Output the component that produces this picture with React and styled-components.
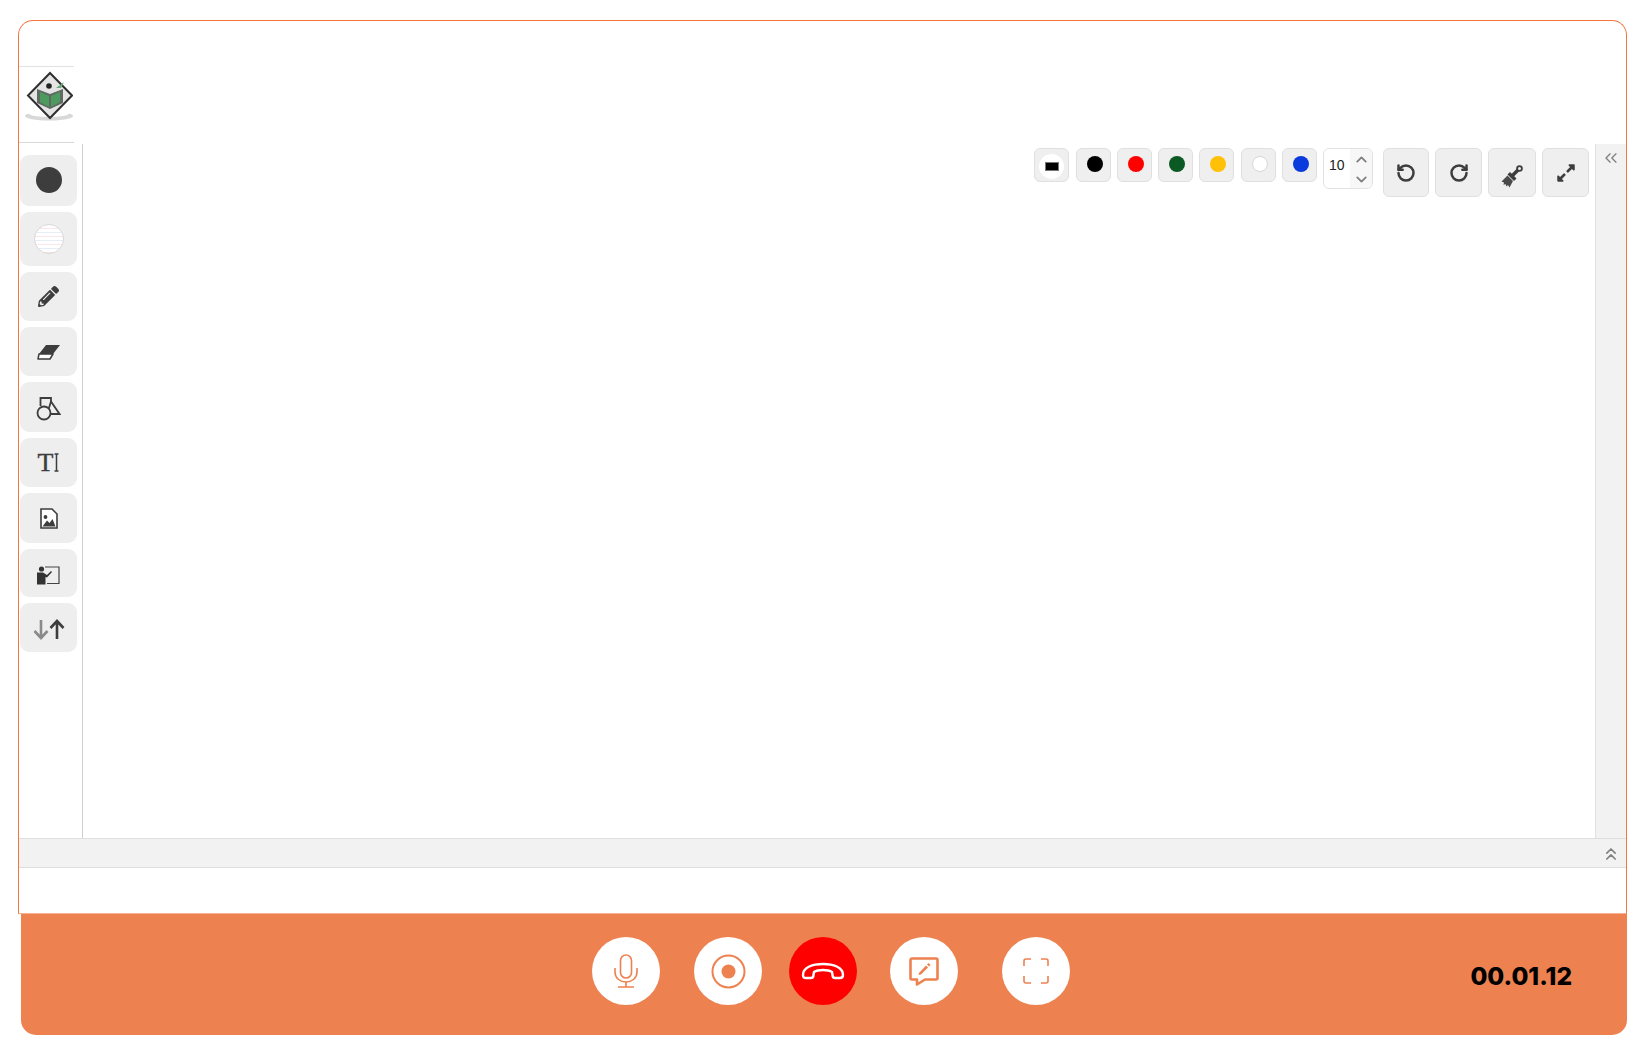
import React from "react";
import styled, { createGlobalStyle } from "styled-components";
import { ChevronsLeft, ChevronsUp, ChevronUp, ChevronDown, RotateCcw, RotateCw } from "lucide-react";
import { FaPencilAlt, FaExpandAlt } from "react-icons/fa";

const ORANGE = "#ee8150";

const GlobalStyle = createGlobalStyle`
  html, body {
    margin: 0;
    padding: 0;
    background: #fff;
    font-family: "Liberation Sans", Arial, sans-serif;
  }
`;

const Page = styled.div`
  width: 1650px;
  height: 1053px;
  padding: 20px 23px 0 18px;
  box-sizing: border-box;
  overflow: hidden;
`;

const Frame = styled.div`
  height: 894px;
  box-sizing: border-box;
  border: 1px solid #f4753f;
  border-bottom: 1px solid #f8b08e;
  border-radius: 15px 15px 0 0;
  padding-top: 45px;
`;

const LogoCell = styled.div`
  width: 55px;
  height: 77px;
  box-sizing: border-box;
  border-top: 1px solid #e2e2e2;
  border-bottom: 1px solid #d8d8d8;
  display: flex;
  align-items: flex-start;
  padding: 3px 0 0 6px;

  svg {
    filter: blur(0.4px);
  }
`;

const Board = styled.div`
  display: flex;
  height: 694px;
  margin-top: 1px;
`;

const Sidebar = styled.aside`
  width: 64px;
  box-sizing: border-box;
  border-right: 1px solid #cfcfcf;
  padding: 11px 0 0 1px;
  display: flex;
  flex-direction: column;
  gap: 6px;
`;

const ToolButton = styled.div`
  width: 57px;
  height: ${(p) => p.$h}px;
  box-sizing: border-box;
  padding-top: ${(p) => p.$nudge || 0}px;
  border-radius: 9px;
  background: #eeeeee;
  color: #3d3d3d;
  display: flex;
  align-items: center;
  justify-content: center;
  flex-shrink: 0;
`;

const FillDot = styled.span`
  width: 26px;
  height: 26px;
  margin-bottom: 1px;
  border-radius: 50%;
  background: #3d3d3d;
`;

const PaperDot = styled.span`
  width: 28px;
  height: 28px;
  border-radius: 50%;
  border: 1px solid #d9d9d9;
  background: repeating-linear-gradient(180deg, #fff 0 3px, #f8e6ea 3px 4px, #fff 4px 7px, #e6ecf8 7px 8px);
`;

const TextTool = styled.span`
  display: flex;
  align-items: center;
  gap: 1px;
  font: 400 26px "Liberation Serif", serif;
  -webkit-text-stroke: 0.4px #3d3d3d;
  color: #3d3d3d;
  line-height: 1;
`;

const Canvas = styled.main`
  flex: 1;
  display: flex;
  justify-content: flex-end;
  align-items: flex-start;
  padding: 4px 6px 0 0;
`;

const Toolbar = styled.div`
  display: flex;
  align-items: flex-start;
`;

const Swatches = styled.div`
  display: flex;
  gap: 6.3px;
  margin-right: 6px;
`;

const Swatch = styled.div`
  width: 35px;
  height: 34px;
  box-sizing: border-box;
  border: 1px solid #e0e0e0;
  border-radius: 6px;
  background: #efefef;
  display: flex;
  align-items: center;
  justify-content: center;
  padding: 0 0 3px 3px;
`;

const Dot = styled.span`
  width: 16px;
  height: 16px;
  box-sizing: border-box;
  border-radius: 50%;
  background: ${(p) => p.$color};
  border: ${(p) => (p.$color === "#ffffff" ? "1px solid #d8d8d8" : "none")};
`;

const BgSwatch = styled(Swatch)`
  padding: 3px 0 0 0;
`;

const BgRing = styled.span`
  width: 25px;
  height: 25px;
  border-radius: 50%;
  background: #fff;
  display: flex;
  align-items: center;
  justify-content: center;
`;

const BgChip = styled.span`
  width: 14px;
  height: 9px;
  box-sizing: border-box;
  background: #000;
  border: 1px solid #777;
`;

const SizeBox = styled.div`
  width: 50px;
  height: 41px;
  box-sizing: border-box;
  border: 1px solid #e2e2e2;
  border-radius: 6px;
  display: flex;
  overflow: hidden;
  margin-right: 10px;
  background: #fff;
`;

const SizeValue = styled.span`
  flex: 1;
  font-size: 14px;
  color: #222;
  padding: 8px 0 0 5px;
`;

const Stepper = styled.span`
  width: 22px;
  background: #f7f7f7;
  color: #808080;
  display: flex;
  flex-direction: column;
  align-items: center;
  justify-content: space-between;
  padding: 2px 0 0;
`;

const ActionButtons = styled.div`
  display: flex;
  gap: 6px;
`;

const ActionButton = styled.div`
  width: ${(p) => p.$w}px;
  height: 49px;
  box-sizing: border-box;
  padding-top: ${(p) => p.$nudge || 0}px;
  border: 1px solid #e0e0e0;
  border-radius: 6px;
  background: #efefef;
  color: #3d3d3d;
  display: flex;
  align-items: center;
  justify-content: center;
`;

const SidePanel = styled.div`
  width: 31px;
  box-sizing: border-box;
  background: #f2f2f2;
  border-left: 1px solid #e2e2e2;
  color: #808080;
  padding: 4px 0 0 5px;
`;

const Strip = styled.div`
  height: 30px;
  box-sizing: border-box;
  background: #f2f2f2;
  border-top: 1px solid #dedede;
  border-bottom: 1px solid #dedede;
  display: flex;
  justify-content: flex-end;
  align-items: center;
  color: #808080;
  padding: 1px 5px 0 0;
`;

const CallBar = styled.footer`
  height: 121px;
  margin-left: 3px;
  box-sizing: border-box;
  background: ${ORANGE};
  border-radius: 0 0 15px 15px;
  display: flex;
  align-items: flex-start;
  padding: 23px 55px 0 571px;
`;

const Round = styled.div`
  width: 68px;
  height: 68px;
  border-radius: 50%;
  background: ${(p) => (p.$danger ? "#ff0000" : "#fff")};
  color: ${ORANGE};
  margin-left: ${(p) => p.$gap || 0}px;
  display: flex;
  align-items: center;
  justify-content: center;
  flex-shrink: 0;
`;

const Timer = styled.div`
  margin-left: auto;
  margin-top: 24px;
  font: 800 24.5px Inter, "Liberation Sans", sans-serif;
  color: #000;
  line-height: 30px;
`;

const Logo = () => (
  <svg width="48" height="54" viewBox="0 0 48 54">
    <ellipse cx="24" cy="46" rx="24" ry="4.5" fill="#d8d8d8" />
    <ellipse cx="24" cy="43.5" rx="20" ry="3.5" fill="#fff" />
    <path d="M25 3 L47 25.5 L25 48 L3 25.5 Z" fill="#e4e4e4" stroke="#2f2f2f" strokeWidth="2" />
    <path d="M12 19 L25 24 L38 19 V33 L25 39 L12 33 Z" fill="#5f6b62" />
    <path d="M15 22 L24 26 V37 L15 32 Z M35 22 L26 26 V37 L35 32 Z" fill="#4d9a5f" />
    <circle cx="24" cy="16" r="2.8" fill="#222" />
    <path d="M31 18 L39 12 L36 18 Z" fill="#6aa97a" />
  </svg>
);

const EraserIcon = () => (
  <svg width="24" height="16" viewBox="0 0 24 16">
    <path d="M9 1 H23 L16 10 H2 Z" fill="#3d3d3d" />
    <path d="M2 10 H16 L13 15 H1 Z" fill="#fff" stroke="#3d3d3d" strokeWidth="1.5" strokeLinejoin="round" />
  </svg>
);

const ShapesIcon = () => (
  <svg width="25" height="24" viewBox="0 0 25 24" fill="none" stroke="#3d3d3d" strokeWidth="1.8">
    <path d="M4.5 9 V1 H15 V5" />
    <path d="M15 4.5 L23.5 17 H11 Z" />
    <circle cx="8" cy="16" r="6.5" fill="#eeeeee" />
  </svg>
);

const CursorIcon = () => (
  <svg width="5" height="19" viewBox="0 0 5 19" fill="none" stroke="#3d3d3d" strokeWidth="1.5">
    <path d="M2.5 1 V18 M0.5 1 H4.5 M0.5 18 H4.5" />
  </svg>
);

const ImageFileIcon = () => (
  <svg width="18" height="21" viewBox="0 0 18 21">
    <path d="M1 1 H12 L17 6 V20 H1 Z" fill="#fff" stroke="#3d3d3d" strokeWidth="1.6" />
    <circle cx="5.5" cy="9" r="1.9" fill="#3d3d3d" />
    <path d="M2.5 18.5 L7 12.5 L9.5 15 L12.5 11 L15.5 18.5 Z" fill="#3d3d3d" />
  </svg>
);

const TeacherIcon = () => (
  <svg width="23" height="19" viewBox="0 0 23 19">
    <circle cx="4.5" cy="3" r="2.6" fill="#333" />
    <path d="M0 6.5 H6 L10 9 L14 5 L15 6 L10 11.5 L8.5 11 V18.5 H0 Z" fill="#333" />
    <path d="M8 1 H22 V17.5 H10" fill="none" stroke="#444" strokeWidth="1.2" />
  </svg>
);

const SortIcon = () => (
  <svg width="32" height="21" viewBox="0 0 32 21" fill="none" strokeWidth="2.6">
    <path d="M8 1 V19 M1.5 12 L8 19 L14.5 12" stroke="#8a8a8a" />
    <path d="M24 20 V2 M17.5 9 L24 2 L30.5 9" stroke="#3d3d3d" />
  </svg>
);

const BrushIcon = () => (
  <svg width="22" height="23" viewBox="0 0 22 23" fill="#3d3d3d">
    <circle cx="18.5" cy="3.5" r="2.4" fill="none" stroke="#3d3d3d" strokeWidth="1.8" />
    <path d="M17 5 L11 11" stroke="#3d3d3d" strokeWidth="3.6" />
    <path d="M9 7 L15.5 13.5 L13 16 L6.5 9.5 Z" />
    <path d="M6.5 10.5 L12 16 L8.5 22.5 L7 20 L5.5 21.5 L4.5 19 L2.5 20 L3 17.5 L0.5 16.5 Z" fill="#4a4a4a" />
  </svg>
);

const MicIcon = () => (
  <svg width="24" height="34" viewBox="0 0 24 34" fill="none" stroke="currentColor" strokeWidth="1.6">
    <rect x="6.5" y="1" width="11" height="23" rx="5.5" />
    <path d="M1 14 V18 C1 24 6 28 12 28 C18 28 23 24 23 18 V14" />
    <path d="M12 28 V33 M4 33 H20" />
  </svg>
);

const RecordIcon = () => (
  <svg width="35" height="35" viewBox="0 0 35 35" fill="none">
    <circle cx="17.5" cy="17.5" r="16" stroke="currentColor" strokeWidth="2" />
    <circle cx="17.5" cy="17.5" r="7" fill="currentColor" />
  </svg>
);

const HangupIcon = () => (
  <svg width="44" height="18" viewBox="0 0 44 18" fill="none" stroke="#fff" strokeWidth="2.4" strokeLinejoin="round">
    <path d="M2 13 C2 5 12 2 22 2 C32 2 42 5 42 13 C42 15 41 16 39 16 L34 16 C32 16 31.5 15 31.5 13 L31 10 C28 8 25 8 22 8 C19 8 16 8 13 10 L12.5 13 C12.5 15 12 16 10 16 L5 16 C3 16 2 15 2 13 Z" />
  </svg>
);

const NoteIcon = () => (
  <svg width="30" height="29" viewBox="0 0 30 29">
    <path d="M3 1.5 H27 A1.5 1.5 0 0 1 28.5 3 V21 A1.5 1.5 0 0 1 27 22.5 H16 L8 27.5 V22.5 H3 A1.5 1.5 0 0 1 1.5 21 V3 A1.5 1.5 0 0 1 3 1.5 Z" fill="none" stroke="currentColor" strokeWidth="2.6" strokeLinejoin="round" />
    <path d="M10 16 L17 8.5 L19 10.5 L12 17.5 L9.5 18 Z M18 7.5 L19.5 6 L21.5 8 L20 9.5 Z" fill="currentColor" />
  </svg>
);

const FrameIcon = () => (
  <svg width="26" height="26" viewBox="0 0 26 26" fill="none" stroke="currentColor" strokeWidth="1.6">
    <path d="M1 8 V3 A2 2 0 0 1 3 1 H8" />
    <path d="M18 1 H23 A2 2 0 0 1 25 3 V8" />
    <path d="M25 18 V23 A2 2 0 0 1 23 25 H18" />
    <path d="M8 25 H3 A2 2 0 0 1 1 23 V18" />
  </svg>
);

const swatchColors = ["#000000", "#ff0000", "#0b5a24", "#ffc107", "#ffffff", "#0b3bdc"];

export default function App() {
  return (
    <Page>
      <GlobalStyle />
      <Frame>
        <LogoCell>
          <Logo />
        </LogoCell>
        <Board>
          <Sidebar>
            <ToolButton $h={51}><FillDot /></ToolButton>
            <ToolButton $h={54}><PaperDot /></ToolButton>
            <ToolButton $h={49}><FaPencilAlt size={21} /></ToolButton>
            <ToolButton $h={49}><EraserIcon /></ToolButton>
            <ToolButton $h={50} $nudge={4}><ShapesIcon /></ToolButton>
            <ToolButton $h={49}><TextTool>T<CursorIcon /></TextTool></ToolButton>
            <ToolButton $h={50}><ImageFileIcon /></ToolButton>
            <ToolButton $h={48} $nudge={4}><TeacherIcon /></ToolButton>
            <ToolButton $h={49} $nudge={4}><SortIcon /></ToolButton>
          </Sidebar>
          <Canvas>
            <Toolbar>
              <Swatches>
                <BgSwatch><BgRing><BgChip /></BgRing></BgSwatch>
                {swatchColors.map((c) => (
                  <Swatch key={c}><Dot $color={c} /></Swatch>
                ))}
              </Swatches>
              <SizeBox>
                <SizeValue>10</SizeValue>
                <Stepper>
                  <ChevronUp size={17} strokeWidth={2.6} />
                  <ChevronDown size={17} strokeWidth={2.6} />
                </Stepper>
              </SizeBox>
              <ActionButtons>
                <ActionButton $w={46}><RotateCcw size={20} strokeWidth={3} /></ActionButton>
                <ActionButton $w={47}><RotateCw size={20} strokeWidth={3} /></ActionButton>
                <ActionButton $w={48} $nudge={7}><BrushIcon /></ActionButton>
                <ActionButton $w={47}><FaExpandAlt size={20} /></ActionButton>
              </ActionButtons>
            </Toolbar>
          </Canvas>
          <SidePanel>
            <ChevronsLeft size={20} strokeWidth={1.6} />
          </SidePanel>
        </Board>
        <Strip>
          <ChevronsUp size={20} strokeWidth={2} />
        </Strip>
      </Frame>
      <CallBar>
        <Round><MicIcon /></Round>
        <Round $gap={34}><RecordIcon /></Round>
        <Round $gap={27} $danger><HangupIcon /></Round>
        <Round $gap={33}><NoteIcon /></Round>
        <Round $gap={44}><FrameIcon /></Round>
        <Timer>00.01.12</Timer>
      </CallBar>
    </Page>
  );
}
